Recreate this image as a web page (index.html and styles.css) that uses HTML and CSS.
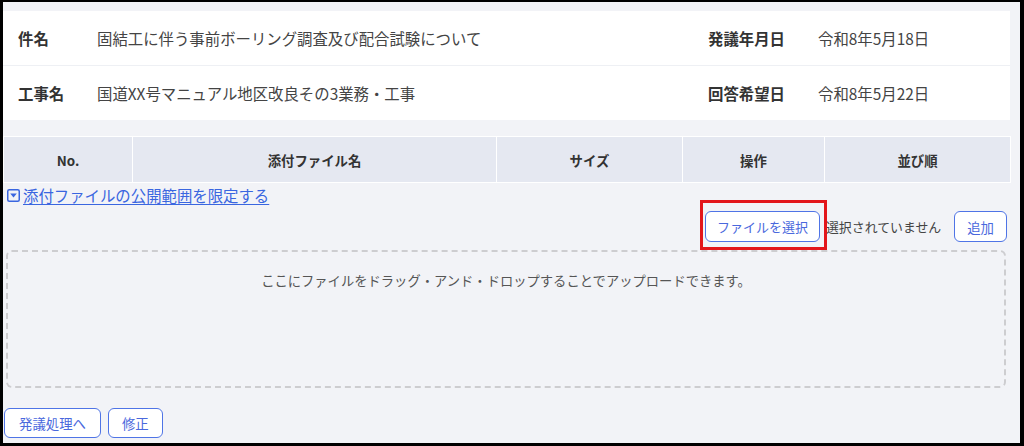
FILE: index.html
```html
<!DOCTYPE html>
<html lang="ja">
<head>
  <meta charset="UTF-8">
  <meta content="width=device-width, initial-scale=1.0" name="viewport">
  <title>添付ファイル登録</title>
  <link rel="stylesheet" href="styles.css">
</head>
<body>
<div class="screen">
  <div class="content">
    <div class="info-card">
      <div class="info-row">
        <span class="info-label">件名</span>
        <span class="info-value">固結工に伴う事前ボーリング調査及び配合試験について</span>
        <span class="info-label">発議年月日</span>
        <span class="info-value">令和8年5月18日</span>
      </div>
      <div class="info-row">
        <span class="info-label">工事名</span>
        <span class="info-value">国道XX号マニュアル地区改良その3業務・工事</span>
        <span class="info-label">回答希望日</span>
        <span class="info-value">令和8年5月22日</span>
      </div>
    </div>

    <table class="file-table">
      <colgroup>
        <col style="width: 129px">
        <col style="width: 364px">
        <col style="width: 186px">
        <col style="width: 142px">
        <col style="width: 186px">
      </colgroup>
      <thead>
        <tr>
          <th>No.</th>
          <th>添付ファイル名</th>
          <th>サイズ</th>
          <th>操作</th>
          <th>並び順</th>
        </tr>
      </thead>
    </table>

    <a class="scope-toggle" href="#">
      <span class="toggle-icon">
        <svg width="13" height="13" viewBox="0 0 13 13">
          <rect x="0.75" y="0.75" width="11.5" height="11.5" rx="1.5" fill="none" stroke="#3a66e0" stroke-width="1.5"/>
          <path d="M3.2 4.6 H9.8 L6.5 8.4 Z" fill="#3a66e0"/>
        </svg>
      </span>添付ファイルの公開範囲を限定する</a>

    <div class="file-picker">
      <span class="pick-wrap">
        <button class="btn btn-pick" type="button">ファイルを選択</button>
      </span>
      <span class="pick-status">選択されていません</span>
      <button class="btn btn-add" type="button">追加</button>
    </div>

    <div class="drop-zone">
      ここにファイルをドラッグ・アンド・ドロップすることでアップロードできます。
    </div>

    <div class="actions">
      <button class="btn" type="button">発議処理へ</button>
      <button class="btn" type="button">修正</button>
    </div>
  </div>
</div>
</body>
</html>
```

FILE: styles.css
```css
body {
  margin: 0;
  background: #000;
  font-family: "Noto Sans CJK JP", "Noto Sans", sans-serif;
  color: #333;
}

.screen {
  margin: 2px 4px 0 3px;
  height: 441px;
  background: #f2f3f7;
  padding-top: 9px;
  box-sizing: border-box;
  overflow: hidden;
}

.content {
  width: 1007px;
}

/* header info */
.info-card {
  background: #fff;
}

.info-row {
  display: grid;
  grid-template-columns: 79px 611px 110px 192px;
  padding-left: 15px;
  height: 54px;
  align-items: center;
  font-size: 15.4px;
  line-height: 22px;
}

.info-row + .info-row {
  border-top: 1px solid #eef0f4;
}

.info-label {
  font-weight: bold;
  color: #333;
}

.info-value {
  color: #444;
}

/* attachment table */
.file-table {
  margin-top: 16px;
  border-collapse: collapse;
  table-layout: fixed;
  width: 1007px;
}

.file-table th {
  background: #e5e8f1;
  border: 1px solid #fff;
  height: 45px;
  padding: 0;
  font-size: 13.4px;
  font-weight: bold;
  color: #333;
  text-align: center;
}

.scope-toggle {
  display: flex;
  align-items: center;
  margin-top: 1px;
  padding-left: 4px;
  height: 22px;
  font-size: 15.4px;
  color: #3a66e0;
  text-decoration: underline;
  text-underline-offset: 2px;
}

.toggle-icon {
  display: inline-flex;
  margin-right: 3px;
}

/* file picker row */
.file-picker {
  display: flex;
  justify-content: flex-end;
  align-items: center;
  margin-top: 5px;
  padding-right: 3px;
}

.pick-wrap {
  position: relative;
  display: inline-flex;
}

.pick-wrap::after {
  content: "";
  position: absolute;
  top: -11px;
  left: -5px;
  right: -7px;
  bottom: -8px;
  border: 3px solid #e3161b;
}

.pick-status {
  margin-left: 6px;
  font-size: 12.9px;
  color: #444;
}

.btn {
  height: 31px;
  padding: 0 12px;
  background: #fff;
  border: 1px solid #4f74e6;
  border-radius: 6px;
  color: #4a68dd;
  font-family: inherit;
  font-size: 13.4px;
  cursor: pointer;
}

.btn-pick {
  padding: 0 11px;
  font-size: 13px;
}

.btn-add {
  margin-left: 13px;
}

.drop-zone {
  margin: 8px 4px 0 3px;
  height: 138px;
  box-sizing: border-box;
  border: 2px dashed #cdcdd0;
  border-radius: 6px;
  padding-top: 19px;
  text-align: center;
  font-size: 13.3px;
  line-height: 20px;
  color: #555;
}

.actions {
  display: flex;
  gap: 7px;
  margin-top: 20px;
  margin-left: 1px;
}

.actions .btn {
  height: 30px;
  padding: 0 14px;
}

.actions .btn + .btn {
  padding: 0 13px;
}
```
